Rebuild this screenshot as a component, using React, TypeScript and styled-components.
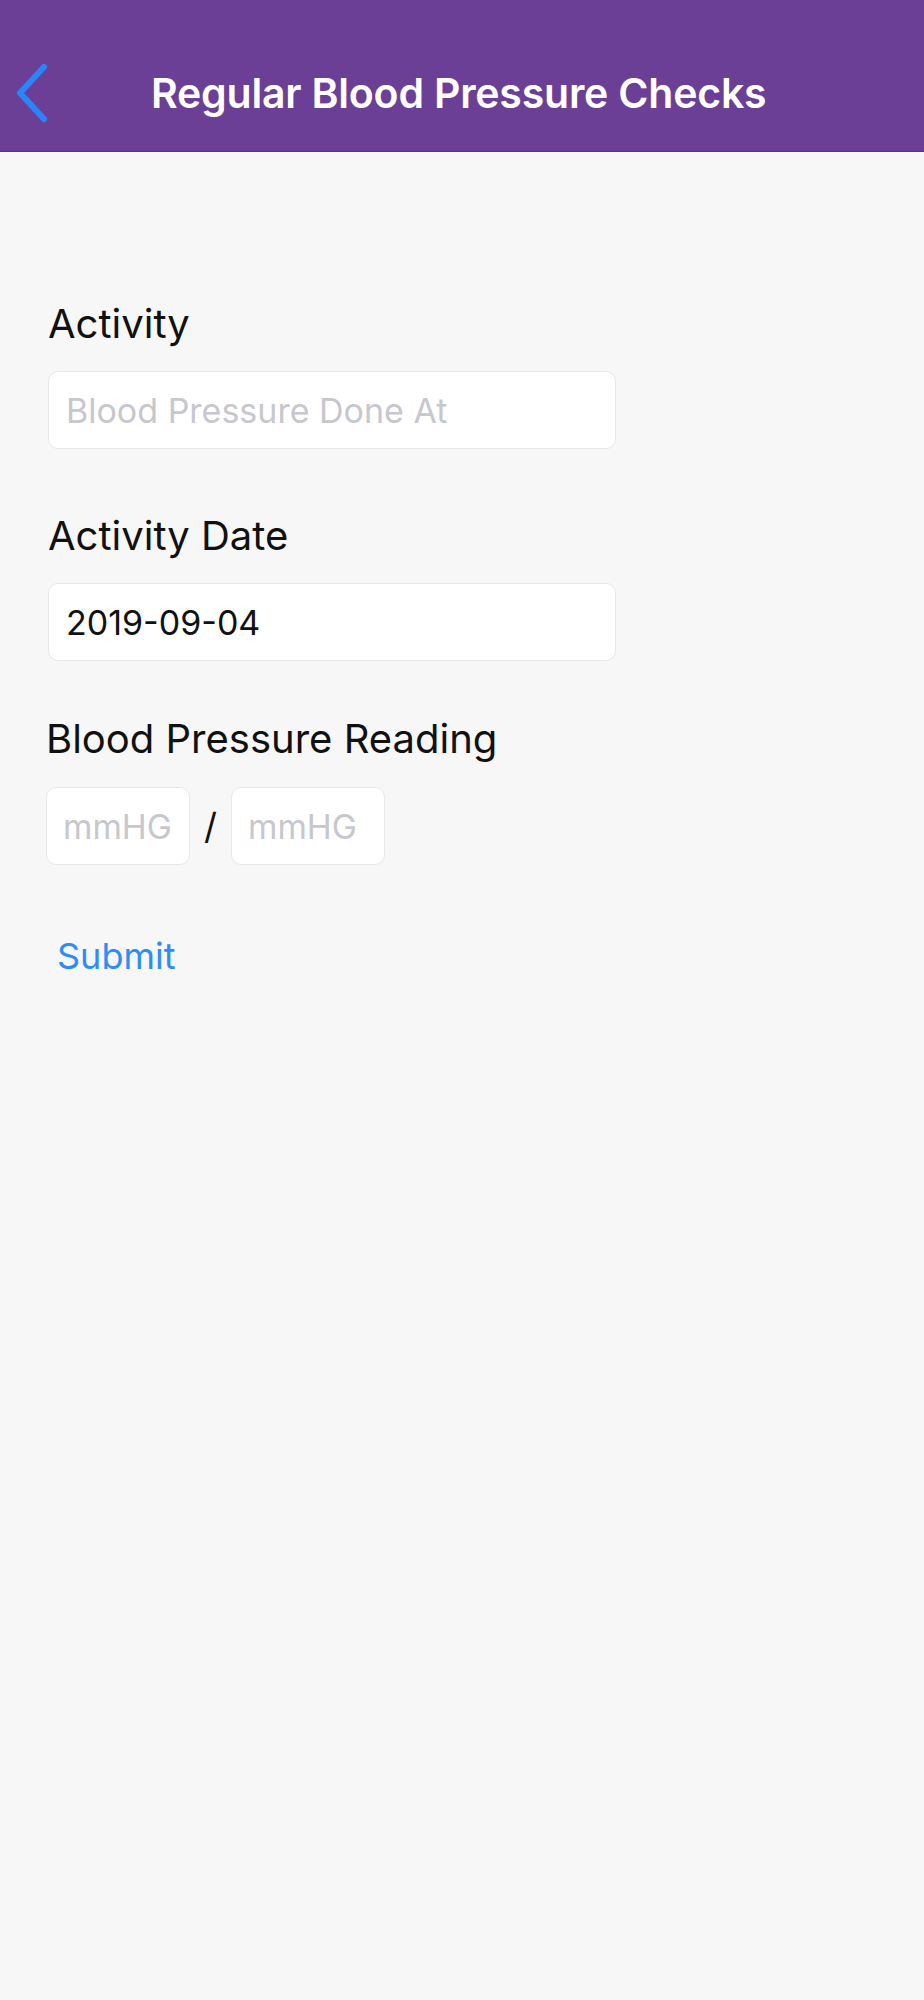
import React from "react";
import styled, { createGlobalStyle } from "styled-components";

const Global = createGlobalStyle`
  html, body { margin: 0; padding: 0; background: #f7f7f7; }
  body { font-family: Inter, "Noto Sans", sans-serif; -webkit-font-smoothing: antialiased; }
  * { box-sizing: border-box; }
`;

const Screen = styled.div`
  width: 924px;
  min-height: 2000px;
  background: #f7f7f7;
  display: flex;
  flex-direction: column;
`;

const Header = styled.header`
  height: 152px;
  background: #6b3f96;
  padding-top: 34px;
  display: flex;
  align-items: center;
  border-bottom: 1px solid #5d3585;
`;

const BackButton = styled.button`
  width: 40px;
  height: 60px;
  margin-left: 12px;
  border: none;
  background: transparent;
  padding: 0;
  display: flex;
  align-items: center;
  justify-content: center;
`;

const Title = styled.h1`
  margin: 0 0 0 99px;
  color: #ffffff;
  font-size: 41px;
  font-weight: 600;
  letter-spacing: -0.2px;
`;

const Form = styled.main`
  padding: 149px 0 0 48px;
  display: flex;
  flex-direction: column;
`;

const Label = styled.div<{ $top?: number; $shift?: number }>`
  margin-top: ${(p) => p.$top ?? 0}px;
  margin-left: ${(p) => p.$shift ?? 0}px;
  height: 46px;
  line-height: 46px;
  font-size: 40px;
  color: #111;
`;

const Field = styled.div<{ $width: number }>`
  margin-top: 24px;
  width: ${(p) => p.$width}px;
  height: 78px;
  background: #fff;
  border: 1px solid #e8e8e8;
  border-radius: 10px;
  display: flex;
  align-items: center;
  padding-left: 17px;
  font-size: 34px;
`;

const Placeholder = styled.span<{ $size?: number }>`
  color: #c7c7cd;
  font-size: ${(p) => p.$size ?? 34}px;
`;

const Value = styled.span`
  color: #111;
`;

const ReadingRow = styled.div`
  display: flex;
  align-items: center;
  margin-left: -2px;
  margin-top: 25px;
`;

const SmallField = styled.div<{ $width: number }>`
  width: ${(p) => p.$width}px;
  height: 78px;
  background: #fff;
  border: 1px solid #e8e8e8;
  border-radius: 10px;
  display: flex;
  align-items: center;
  padding-left: 16px;
`;

const Slash = styled.span`
  width: 41px;
  text-align: center;
  font-size: 36px;
  color: #111;
`;

const Submit = styled.button`
  margin-top: 68px;
  margin-left: 9px;
  align-self: flex-start;
  border: none;
  background: transparent;
  padding: 0;
  font-family: inherit;
  font-size: 36px;
  color: #2f8cf4;
  line-height: 46px;
`;

export default function App() {
  return (
    <>
      <Global />
      <Screen>
        <Header>
          <BackButton aria-label="Back">
            <svg width="36" height="60" viewBox="0 0 36 60" fill="none">
              <path d="M30 4 L6 30 L30 56" stroke="#2a85fb" strokeWidth="6" strokeLinecap="round" strokeLinejoin="round" />
            </svg>
          </BackButton>
          <Title>Regular Blood Pressure Checks</Title>
        </Header>
        <Form>
          <Label>Activity</Label>
          <Field $width={568}>
            <Placeholder>Blood Pressure Done At</Placeholder>
          </Field>
          <Label $top={64}>Activity Date</Label>
          <Field $width={568}>
            <Value>2019-09-04</Value>
          </Field>
          <Label $top={55} $shift={-2}>Blood Pressure Reading</Label>
          <ReadingRow>
            <SmallField $width={144}>
              <Placeholder $size={33.6}>mmHG</Placeholder>
            </SmallField>
            <Slash>/</Slash>
            <SmallField $width={154}>
              <Placeholder $size={33.6}>mmHG</Placeholder>
            </SmallField>
          </ReadingRow>
          <Submit>Submit</Submit>
        </Form>
      </Screen>
    </>
  );
}
